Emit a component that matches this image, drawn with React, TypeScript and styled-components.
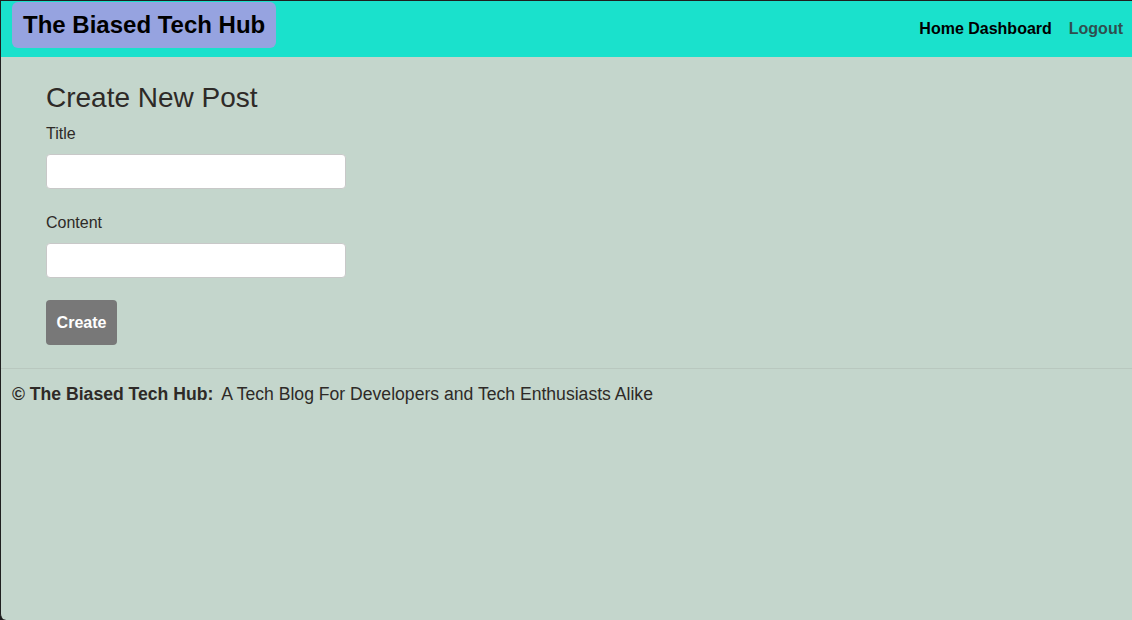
import * as React from "react";
import styled, { createGlobalStyle } from "styled-components";

const GlobalStyle = createGlobalStyle`
  html, body {
    margin: 0;
    padding: 0;
    height: 100%;
    background: #1c1c1c;
  }
  #root {
    height: 100%;
  }
  * {
    box-sizing: border-box;
  }
`;

const Frame = styled.div`
  height: 620px;
  border-top: 1px solid #1f1f1f;
  border-left: 1px solid #1f1f1f;
  border-bottom-left-radius: 6px;
  background-color: #c4d6cc;
  font-family: "Liberation Sans", Arial, sans-serif;
  color: #2e2a27;
  overflow: hidden;
  display: flex;
  flex-direction: column;
`;

const Header = styled.header`
  height: 56px;
  background-color: #1ae1cc;
  display: flex;
  justify-content: space-between;
  align-items: flex-start;
  padding: 1px 9px 0 11px;
`;

const Brand = styled.a`
  display: flex;
  align-items: center;
  height: 46px;
  padding: 0 11px;
  background-color: #96a3e0;
  border-radius: 6px;
  color: #000;
  font-size: 24px;
  font-weight: 700;
  text-decoration: none;
`;

const Nav = styled.nav`
  align-self: center;
  display: flex;
  gap: 17px;
  margin-top: -2px;
`;

const NavLink = styled.a<{ $muted?: boolean }>`
  font-size: 16px;
  font-weight: 700;
  color: ${(p) => (p.$muted ? "#2f4f4f" : "#000")};
  text-decoration: none;
`;

const Main = styled.main`
  padding: 25px 45px 23px;
  border-bottom: 1px solid #b9c8bf;
`;

const Heading = styled.h2`
  margin: 0 0 10px;
  font-size: 28px;
  font-weight: 400;
  line-height: 32px;
`;

const Form = styled.form`
  display: flex;
  flex-direction: column;
`;

const Field = styled.div`
  display: flex;
  flex-direction: column;
  margin-bottom: 21px;

  & + & {
    margin-top: 3px;
  }
`;

const Label = styled.label`
  font-size: 16px;
  line-height: 20px;
  margin-bottom: 10px;
`;

const Input = styled.input`
  width: 300px;
  height: 35px;
  border: 1px solid #c8c8c8;
  border-radius: 4px;
  background: #fff;
  font-size: 16px;
  padding: 0 10px;
  font-family: inherit;
`;

const Button = styled.button`
  align-self: flex-start;
  width: 71px;
  height: 45px;
  margin-top: 1px;
  border: none;
  border-radius: 4px;
  background-color: #787878;
  color: #fff;
  font-family: inherit;
  font-size: 16px;
  font-weight: 700;
  cursor: pointer;
`;

const Footer = styled.footer`
  padding: 14px 11px;
  font-size: 17.6px;
  line-height: 22px;
`;

const Strong = styled.strong`
  font-weight: 700;
  margin-right: 8px;
`;

export default function App() {
  return (
    <>
      <GlobalStyle />
      <Frame>
        <Header>
          <Brand href="#">The Biased Tech Hub</Brand>
          <Nav>
            <NavLink href="#">Home Dashboard</NavLink>
            <NavLink href="#" $muted>
              Logout
            </NavLink>
          </Nav>
        </Header>
        <Main>
          <Heading>Create New Post</Heading>
          <Form onSubmit={(e) => e.preventDefault()}>
            <Field>
              <Label htmlFor="title">Title</Label>
              <Input id="title" type="text" />
            </Field>
            <Field>
              <Label htmlFor="content">Content</Label>
              <Input id="content" type="text" />
            </Field>
            <Button type="submit">Create</Button>
          </Form>
        </Main>
        <Footer>
          <Strong>© The Biased Tech Hub:</Strong>A Tech Blog For Developers and Tech Enthusiasts Alike
        </Footer>
      </Frame>
    </>
  );
}
